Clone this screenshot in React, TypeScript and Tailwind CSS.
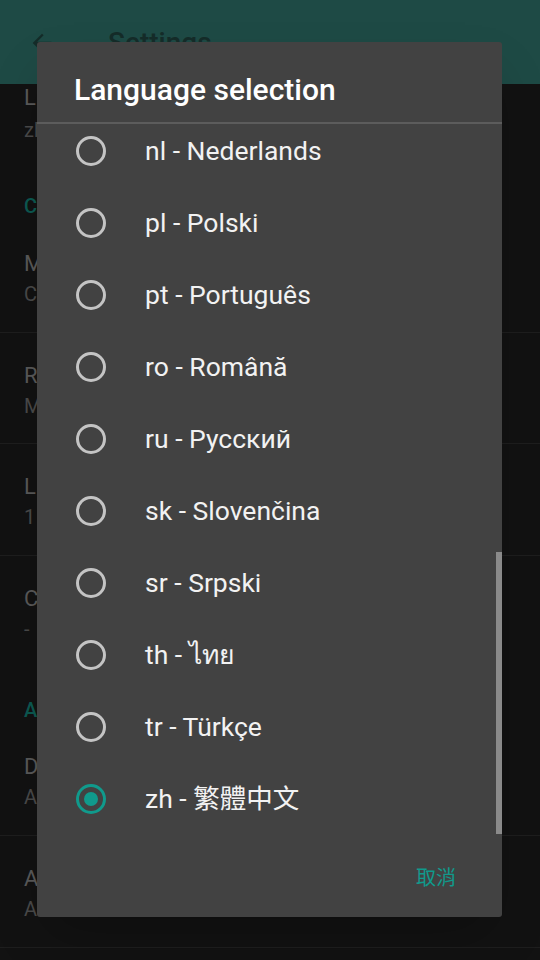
import React from "react";

const LANGS = [
  { code: "nl", name: "Nederlands" },
  { code: "pl", name: "Polski" },
  { code: "pt", name: "Português" },
  { code: "ro", name: "Română" },
  { code: "ru", name: "Русский" },
  { code: "sk", name: "Slovenčina" },
  { code: "sr", name: "Srpski" },
  { code: "th", name: "ไทย" },
  { code: "tr", name: "Türkçe" },
  { code: "zh", name: "繁體中文" },
];

const font = { fontFamily: 'Roboto, "Noto Sans", "Noto Sans CJK TC", sans-serif' };

function Radio({ checked }: { checked: boolean }) {
  return (
    <svg width="32" height="32" viewBox="0 0 32 32" className="shrink-0">
      <circle
        cx="16"
        cy="16"
        r="13.5"
        fill="none"
        stroke={checked ? "#109a8c" : "#c4c4c4"}
        strokeWidth="3"
      />
      {checked && <circle cx="16" cy="16" r="7" fill="#109a8c" />}
    </svg>
  );
}

function BgItem({
  title,
  sub,
  pad,
  border,
  h,
}: {
  title: string;
  sub: string;
  pad: string;
  border?: boolean;
  h: string;
}) {
  return (
    <div className={`${h} ${pad} px-6 ${border ? "border-b border-[#1e1e1e]" : ""}`}>
      <div className="text-[22px] leading-[30px] text-[#5a5a5a]">{title}</div>
      <div className="text-[20px] leading-[30px] text-[#4a4a4a]">{sub}</div>
    </div>
  );
}

export default function App() {
  return (
    <div className="relative w-[540px] h-[960px] overflow-hidden bg-[#121212]" style={font}>
      {/* Background settings screen (dimmed by scrim) */}
      <div className="h-[84px] bg-[#1e4a45] flex items-start pt-[26px]">
        <svg width="28" height="28" viewBox="0 0 24 24" className="ml-[28px] mt-[3px]">
          <path d="M20 11H7.83l5.59-5.59L12 4l-8 8 8 8 1.41-1.41L7.83 13H20v-2z" fill="#152c29" />
        </svg>
        <div className="ml-[52px] text-[28px] font-medium leading-[34px] text-[#152c29]">Settings</div>
      </div>
      <div className="flex flex-col">
        <div className="h-[76px] px-6 -mt-[1px]">
          <div className="text-[22px] leading-[30px] text-[#5a5a5a]">L</div>
          <div className="text-[20px] leading-[30px] mt-[2px] text-[#4a4a4a]">zh</div>
        </div>
        <div className="h-[76px] pt-[32px] px-6 text-[20px] leading-[30px] font-medium text-[#0c5a52]">
          C
        </div>
        <BgItem h="h-[98px]" pad="pt-[14px]" border title="M" sub="C" />
        <BgItem h="h-[111px]" pad="pt-[28px]" border title="R" sub="M" />
        <BgItem h="h-[112px]" pad="pt-[28px]" border title="L" sub="1" />
        <BgItem h="h-[111px]" pad="pt-[28px]" title="C" sub="-" />
        <div className="h-[76px] pt-[28px] px-6 text-[20px] leading-[30px] font-medium text-[#0c5a52]">
          A
        </div>
        <BgItem h="h-[93px]" pad="pt-[9px]" border title="D" sub="A" />
        <BgItem h="h-[112px]" pad="pt-[28px]" border title="A" sub="A" />
      </div>

      {/* Dialog */}
      <div className="absolute left-[37px] top-[42px] w-[465px] h-[875px] bg-[#424242] rounded-[3px] shadow-2xl flex flex-col">
        <div className="h-[80px] pl-[37px] pt-[31px] text-[30px] leading-[34px] font-medium text-white">
          Language selection
        </div>
        <div className="h-[2px] bg-[#5c5c5c]" />
        <div className="relative h-[711px] overflow-hidden">
          <div className="-mt-[9px]">
            {LANGS.map((l) => (
              <div key={l.code} className="h-[72px] flex items-center pl-[38px]">
                <Radio checked={l.code === "zh"} />
                <div className="ml-[38px] text-[26.5px] text-[#f2f2f2] leading-none">
                  {l.code} - {l.name}
                </div>
              </div>
            ))}
          </div>
          <div className="absolute right-0 top-[428px] w-[6px] h-[282px] bg-[#8a8a8a]" />
        </div>
        <div className="flex-1 flex items-center justify-end pr-[46px]">
          <div className="text-[20px] text-[#109a8c] pt-[4px]">取消</div>
        </div>
      </div>
    </div>
  );
}
